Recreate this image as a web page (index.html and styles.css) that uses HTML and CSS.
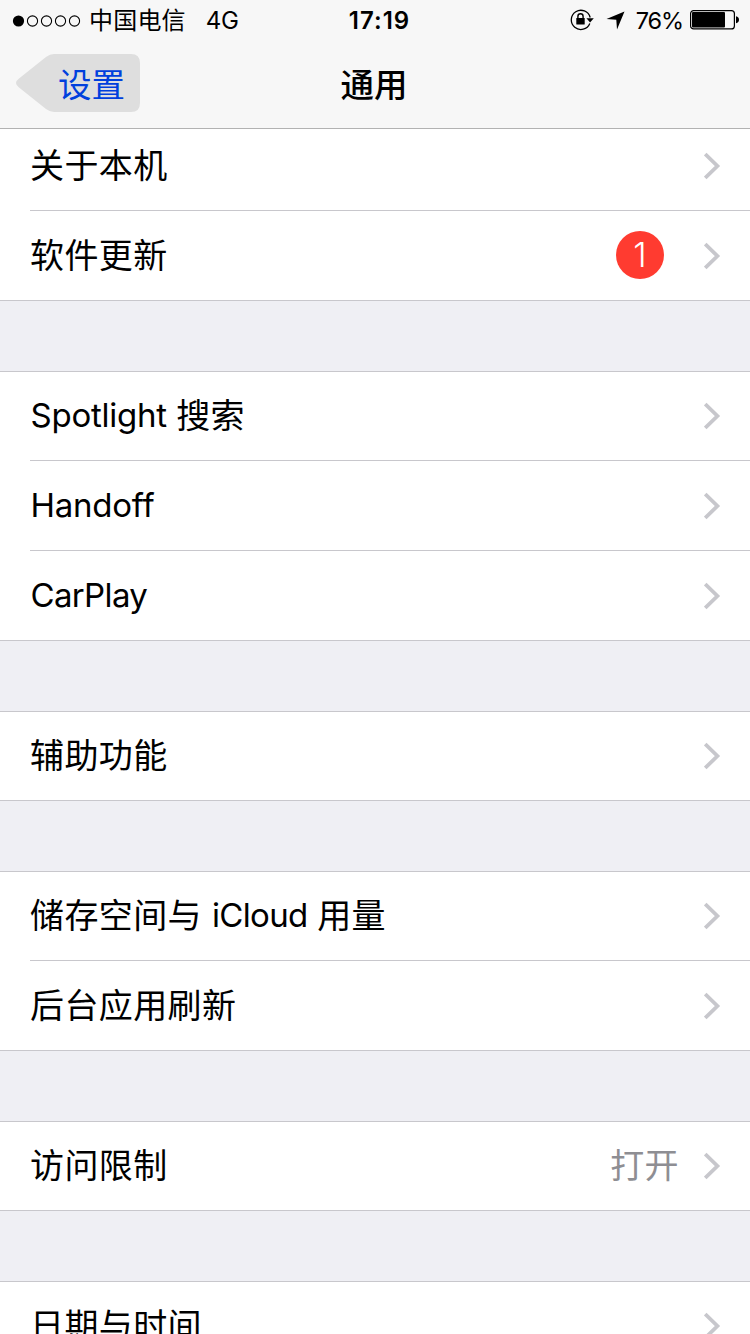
FILE: index.html
```html
<!DOCTYPE html>
<html lang="zh-CN">
<head>
    <meta charset="UTF-8">
    <meta name="viewport" content="width=device-width, initial-scale=1.0">
    <title>通用</title>
    <link rel="stylesheet" href="styles.css">
</head>
<body>
    <svg class="symbols" width="0" height="0">
        <symbol id="chevron" viewBox="0 0 17 28">
            <path d="M1.2 2 L13.4 14 L1.2 26" fill="none" stroke="#c7c7cc" stroke-width="3.8"/>
        </symbol>
    </svg>

    <header class="header">
        <div class="status-bar">
            <div class="status-left">
                <svg class="signal" width="70" height="14" viewBox="0 0 70 14">
                    <circle cx="6.5" cy="7" r="5.6"/>
                    <g fill="none" stroke="#000" stroke-width="1.1">
                        <circle cx="20.5" cy="7" r="5.1"/>
                        <circle cx="34.5" cy="7" r="5.1"/>
                        <circle cx="48.5" cy="7" r="5.1"/>
                        <circle cx="62.5" cy="7" r="5.1"/>
                    </g>
                </svg>
                <span class="carrier">中国电信</span>
                <span class="network">4G</span>
            </div>
            <div class="time">17:19</div>
            <div class="status-right">
                <svg class="lock" width="24" height="22" viewBox="0 0 24 22">
                    <path d="M19.8 14.5 A9.6 9.6 0 1 1 20.2 8.5" fill="none" stroke="#000" stroke-width="1.3"/>
                    <path d="M16.4 9.2 H23.8 L20.1 13.4 Z"/>
                    <rect x="6.3" y="9" width="8.4" height="6.6" rx="0.6"/>
                    <path d="M7.9 9.5 V7.4 A2.6 2.6 0 0 1 13.1 7.4 V9.5" fill="none" stroke="#000" stroke-width="1.4"/>
                </svg>
                <svg class="location" width="19" height="19" viewBox="0 0 19 19">
                    <path d="M18.5 0.5 L11 18.5 L10.3 8.8 L0.5 8 Z"/>
                </svg>
                <span class="percent">76%</span>
                <svg class="battery" width="50" height="20" viewBox="0 0 50 20">
                    <rect x="0.6" y="0.6" width="43.8" height="18.3" rx="3" fill="none" stroke="#000" stroke-width="1.2"/>
                    <rect x="2" y="2" width="33" height="15.4" rx="1"/>
                    <path d="M46 6.3 Q49 7 49 9.8 Q49 12.6 46 13.3 Z"/>
                </svg>
            </div>
        </div>
        <nav class="nav-bar">
            <a class="back" href="#">
                <svg class="back-shape" width="124" height="58" viewBox="0 0 124 58">
                    <path d="M38 0 H115 Q124 0 124 9 V49 Q124 58 115 58 H38 Q34 58 30 55 L3 33.5 Q-3 29 3 24.5 L30 3 Q34 0 38 0 Z" fill="#dedede"/>
                </svg>
                <span class="back-label">设置</span>
            </a>
            <h1>通用</h1>
        </nav>
    </header>

    <main class="settings">
        <ul class="group">
            <li class="row"><span class="label">关于本机</span><svg class="chevron"><use href="#chevron"/></svg></li>
            <li class="row"><span class="label">软件更新</span><span class="badge">1</span><svg class="chevron"><use href="#chevron"/></svg></li>
        </ul>
        <ul class="group">
            <li class="row"><span class="label"><span class="latin">Spotlight</span> 搜索</span><svg class="chevron"><use href="#chevron"/></svg></li>
            <li class="row"><span class="label"><span class="latin">Handoff</span></span><svg class="chevron"><use href="#chevron"/></svg></li>
            <li class="row"><span class="label"><span class="latin narrow">CarPlay</span></span><svg class="chevron"><use href="#chevron"/></svg></li>
        </ul>
        <ul class="group">
            <li class="row"><span class="label">辅助功能</span><svg class="chevron"><use href="#chevron"/></svg></li>
        </ul>
        <ul class="group">
            <li class="row"><span class="label">储存空间与 <span class="latin narrow">iCloud</span> 用量</span><svg class="chevron"><use href="#chevron"/></svg></li>
            <li class="row"><span class="label">后台应用刷新</span><svg class="chevron"><use href="#chevron"/></svg></li>
        </ul>
        <ul class="group">
            <li class="row"><span class="label">访问限制</span><span class="value">打开</span><svg class="chevron"><use href="#chevron"/></svg></li>
        </ul>
        <ul class="group">
            <li class="row"><span class="label">日期与时间</span><svg class="chevron"><use href="#chevron"/></svg></li>
        </ul>
    </main>
</body>
</html>
```
FILE: styles.css
```css
* {
    box-sizing: border-box;
    margin: 0;
    padding: 0;
}
body {
    width: 750px;
    height: 1334px;
    overflow: hidden;
    background: #efeff4;
    color: #000;
    font-family: Inter, "Noto Sans CJK SC", sans-serif;
    font-variant-ligatures: none;
}
.symbols {
    position: absolute;
}

/* header */
.header {
    position: relative;
    z-index: 1;
    height: 129px;
    background: #f7f7f7;
    border-bottom: 1px solid #b2b2b2;
}
.status-bar {
    display: grid;
    grid-template-columns: 1fr auto 1fr;
    align-items: center;
    height: 40px;
    padding: 0 10px 0 12px;
    font-size: 24px;
    line-height: 40px;
}
.status-left, .status-right {
    display: flex;
    align-items: center;
}
.status-right {
    justify-content: flex-end;
}
.carrier, .network, .time, .percent {
    padding-top: 2px;
    line-height: 38px;
}
.signal {
    margin-top: 1px;
}
.carrier {
    margin-left: 7px;
    letter-spacing: 0.2px;
}
.network {
    margin-left: 20px;
    font-size: 24px;
    letter-spacing: -0.4px;
}
.time {
    padding-left: 7px;
    font-weight: 600;
    font-size: 24px;
    letter-spacing: 1px;
}
.location {
    margin-left: 12px;
}
.percent {
    margin-left: 11px;
    font-size: 23.5px;
    letter-spacing: -1.1px;
}
.battery {
    margin-left: 7px;
}
.nav-bar {
    display: grid;
    grid-template-columns: 1fr auto 1fr;
    align-items: center;
    height: 88px;
    padding: 0 16px;
}
.back {
    position: relative;
    width: 124px;
    height: 58px;
    margin-top: -2px;
    padding-left: 42px;
    color: #0040dd;
    font-size: 33.5px;
    line-height: 62px;
    text-decoration: none;
}
.back-shape {
    position: absolute;
    top: 0;
    left: 0;
}
.back-label {
    position: relative;
}
h1 {
    padding: 1px 2px 0 0;
    font-size: 33.5px;
    font-weight: 500;
    line-height: 60px;
}

/* list is scrolled a little under the header */
.settings {
    height: 1213px;
    margin-top: -8px;
    overflow: hidden;
}
.group {
    margin-bottom: 70px;
    background: #fff;
    border-top: 1px solid #c8c7cc;
    list-style: none;
}
.row {
    display: flex;
    align-items: center;
    height: 90px;
    margin-left: 30px;
    padding-right: 29px;
    border-bottom: 1px solid #c8c7cc;
    font-size: 34px;
    line-height: 50px;
}
.row:first-child {
    height: 89px;
}
.row:last-child {
    margin-left: 0;
    padding-left: 30px;
}
.label {
    flex: 1;
    letter-spacing: 0.4px;
    word-spacing: -0.5px;
}
.latin {
    margin-left: 0.5px;
    font-size: 33px;
    letter-spacing: -0.25px;
    line-height: 1;
    vertical-align: 1px;
}
.narrow {
    letter-spacing: -0.65px;
}
.value {
    margin-right: 25px;
    color: #8e8e93;
    letter-spacing: 0.4px;
}
.badge {
    width: 48px;
    height: 48px;
    margin: 0 40px 2px 0;
    border-radius: 50%;
    background: #ff3b30;
    color: #fff;
    font-weight: 300;
    line-height: 48px;
    text-align: center;
}
.chevron {
    width: 17px;
    height: 28px;
}
```
